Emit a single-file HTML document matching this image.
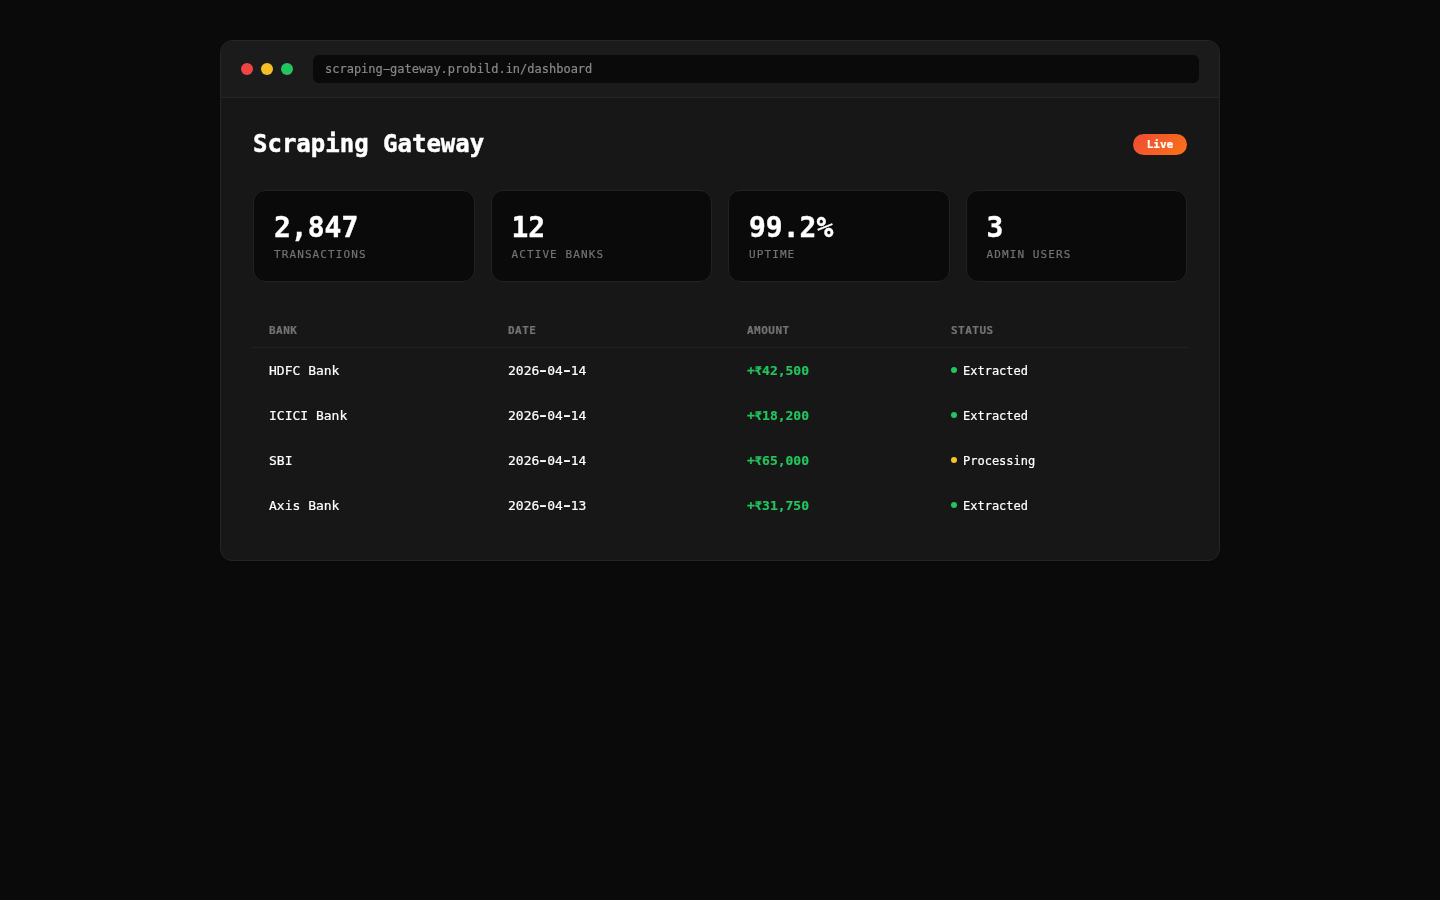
<!DOCTYPE html>
<html lang="en">
<head>
<meta charset="utf-8">
<title>Scraping Gateway</title>
<style>
*{box-sizing:border-box;margin:0;padding:0}
html,body{width:1440px;height:900px;background:#0a0a0a;overflow:hidden}
body{font-family:"DejaVu Sans Mono","Liberation Mono",monospace;color:#fff;padding-top:40px}
.win{width:1000px;height:521px;margin:0 auto;background:#171717;border:1px solid #262626;border-radius:12px;overflow:hidden;will-change:transform}
.bar{background:#1b1b1b;height:57px;border-bottom:1px solid #262626;display:flex;align-items:center;padding:0 20px}
.dots{display:flex;gap:8px;margin-right:20px}
.dots i{display:block;width:12px;height:12px;border-radius:50%}
.url{-webkit-text-stroke:.2px;flex:1;height:28px;background:#0a0a0a;border-radius:6px;color:#888;font-size:12px;line-height:28px;padding:0 12px}
.content{padding:32px}
.head{display:flex;justify-content:space-between;align-items:center}
h1{font-size:24px;font-weight:bold;-webkit-text-stroke:.45px}
.live{-webkit-text-stroke:.2px;background:linear-gradient(135deg,#f04a36,#f97316);color:#fff;font-size:11px;font-weight:bold;padding:4px 0;text-align:center;border-radius:11px;width:54px;position:relative;top:.5px}
.stats{display:grid;grid-template-columns:repeat(4,1fr);gap:16px;margin-top:32px}
.card{background:#0a0a0a;border:1px solid #222;border-radius:12px;padding:20px}
.val{font-size:28px;font-weight:bold;-webkit-text-stroke:.4px}
.lab{-webkit-text-stroke:.2px;font-size:11px;color:#737373;letter-spacing:1.1px;text-transform:uppercase;margin-top:4px}
table{width:100%;border-collapse:separate;border-spacing:0;table-layout:fixed;margin-top:32px;font-size:13px}
th{-webkit-text-stroke:.2px;font-size:11px;color:#737373;letter-spacing:.5px;text-align:left;text-transform:uppercase;padding:10px 16px;border-bottom:1px solid #232323}
td{-webkit-text-stroke:.2px;padding:15px 16px 13px;border-bottom:1px solid #191919;line-height:16px}
.amt{color:#22c55e;font-weight:bold}
.st{font-size:12px}
.r{font-size:12px}
.h{display:inline-block;font-weight:bold;transform:scaleX(1.4)}
.url .h{font-weight:normal;transform:scaleX(2)}
.dot{display:inline-block;width:6px;height:6px;border-radius:50%;margin-right:6px;vertical-align:middle;position:relative;top:-1.5px}
.g{background:#22c55e}.y{background:#f7c32a}
</style>
</head>
<body>
<div class="win">
  <div class="bar">
    <div class="dots"><i style="background:#ef4444"></i><i style="background:#f7be2a"></i><i style="background:#22c55e"></i></div>
    <div class="url">scraping<span class="h">-</span>gateway.probild.in/dashboard</div>
  </div>
  <div class="content">
    <div class="head"><h1>Scraping Gateway</h1><span class="live">Live</span></div>
    <div class="stats">
      <div class="card"><div class="val">2,847</div><div class="lab">TRANSACTIONS</div></div>
      <div class="card"><div class="val">12</div><div class="lab">ACTIVE BANKS</div></div>
      <div class="card"><div class="val">99.2%</div><div class="lab">UPTIME</div></div>
      <div class="card"><div class="val">3</div><div class="lab">ADMIN USERS</div></div>
    </div>
    <table>
      <thead><tr><th style="width:239px">BANK</th><th style="width:239px">DATE</th><th style="width:204px">AMOUNT</th><th>STATUS</th></tr></thead>
      <tbody>
        <tr><td>HDFC Bank</td><td>2026<span class="h">-</span>04<span class="h">-</span>14</td><td class="amt">+<span class="r">₹</span>42,500</td><td class="st"><span class="dot g"></span>Extracted</td></tr>
        <tr><td>ICICI Bank</td><td>2026<span class="h">-</span>04<span class="h">-</span>14</td><td class="amt">+<span class="r">₹</span>18,200</td><td class="st"><span class="dot g"></span>Extracted</td></tr>
        <tr><td>SBI</td><td>2026<span class="h">-</span>04<span class="h">-</span>14</td><td class="amt">+<span class="r">₹</span>65,000</td><td class="st"><span class="dot y"></span>Processing</td></tr>
        <tr><td>Axis Bank</td><td>2026<span class="h">-</span>04<span class="h">-</span>13</td><td class="amt">+<span class="r">₹</span>31,750</td><td class="st"><span class="dot g"></span>Extracted</td></tr>
      </tbody>
    </table>
  </div>
</div>
</body>
</html>
